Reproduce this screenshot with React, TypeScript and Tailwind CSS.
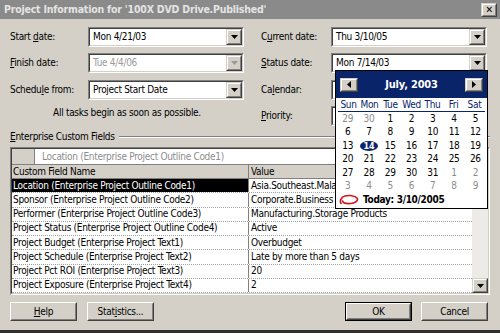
import React from "react";

const rows = [
  ["Location (Enterprise Project Outline Code1)", "Asia.Southeast.Malaysia"],
  ["Sponsor (Enterprise Project Outline Code2)", "Corporate.Business Development"],
  ["Performer (Enterprise Project Outline Code3)", "Manufacturing.Storage Products"],
  ["Project Status (Enterprise Project Outline Code4)", "Active"],
  ["Project Budget (Enterprise Project Text1)", "Overbudget"],
  ["Project Schedule (Enterprise Project Text2)", "Late by more than 5 days"],
  ["Project Pct ROI (Enterprise Project Text3)", "20"],
  ["Project Exposure (Enterprise Project Text4)", "2"],
];

const weeks = [
  [29, 30, 1, 2, 3, 4, 5],
  [6, 7, 8, 9, 10, 11, 12],
  [13, 14, 15, 16, 17, 18, 19],
  [20, 21, 22, 23, 24, 25, 26],
  [27, 28, 29, 30, 31, 1, 2],
  [3, 4, 5, 6, 7, 8, 9],
];

const isOther = (w: number, d: number) =>
  (w === 0 && d < 2) || (w === 4 && d > 4) || w === 5;

// text with one underlined access-key letter
const Key = ({ text, at }: { text: string; at: number }) => (
  <span>
    {text.slice(0, at)}
    <span className="underline underline-offset-[1px]">{text[at]}</span>
    {text.slice(at + 1)}
  </span>
);

const Arrow = ({ dir = "down", color = "#000" }: { dir?: "down" | "up" | "left" | "right"; color?: string }) => {
  if (dir === "down" || dir === "up")
    return (
      <svg width="7" height="4" viewBox="0 0 7 4">
        <path d={dir === "down" ? "M0 0h7L3.5 4z" : "M0 4h7L3.5 0z"} fill={color} />
      </svg>
    );
  return (
    <svg width="4" height="7" viewBox="0 0 4 7">
      <path d={dir === "left" ? "M4 0v7L0 3.5z" : "M0 0v7l4-3.5z"} fill={color} />
    </svg>
  );
};

const Raised = ({ className = "", children }: { className?: string; children?: React.ReactNode }) => (
  <div className={`border border-t-[#d4d0c8] border-l-[#d4d0c8] border-b-[#404040] border-r-[#404040] ${className}`}>
    <div className="h-full w-full flex items-center justify-center bg-[#d4d0c8] border border-t-white border-l-white border-b-[#808080] border-r-[#808080]">
      {children}
    </div>
  </div>
);

const Field = ({ value, disabled }: { value: string; disabled?: boolean }) => (
  <div className="h-[20px] w-[156px] border border-t-[#808080] border-l-[#808080] border-b-white border-r-white">
    <div className="h-full flex items-center bg-white border border-t-[#404040] border-l-[#404040] border-b-[#d4d0c8] border-r-[#d4d0c8]">
      <span className={`flex-1 pl-[3px] ${disabled ? "text-[#9a9a9a]" : "text-black"}`}>{value}</span>
      <Raised className="w-[16px] h-[16px]">
        <Arrow color={disabled ? "#9a9a9a" : "#000"} />
      </Raised>
    </div>
  </div>
);

const Row = ({ label, at, w, children }: { label: string; at: number; w: string; children: React.ReactNode }) => (
  <div className="flex items-center h-[20px]">
    <div className={w}>
      <Key text={label} at={at} />
    </div>
    {children}
  </div>
);

const Button = ({ children, isDefault }: { children: React.ReactNode; isDefault?: boolean }) => (
  <div className={`w-[67px] h-[19px] ${isDefault ? "border border-black" : ""}`}>
    <div className="h-full border border-t-white border-l-white border-b-[#404040] border-r-[#404040]">
      <div className="h-full flex items-center justify-center border border-t-[#d4d0c8] border-l-[#d4d0c8] border-b-[#808080] border-r-[#808080]">
        {children}
      </div>
    </div>
  </div>
);

const TodayMark = () => (
  <svg width="20" height="11" viewBox="0 0 20 11">
    <path
      d="M2 9.5C0.5 7 2 3 6 2C10 1 16 1.5 18 4C19.5 6 17 9 12 9.5C8 9.8 4 9 3.5 7"
      fill="none"
      stroke="#d4141c"
      strokeWidth="1.6"
      strokeLinecap="round"
    />
  </svg>
);

const Calendar = () => (
  <div className="absolute left-[335px] top-[70px] w-[153px] h-[139px] bg-white border border-black flex flex-col">
    <div className="h-[27px] bg-[#0a246a] flex items-center justify-between px-[4px]">
      <Raised className="w-[18px] h-[14px]">
        <Arrow dir="left" />
      </Raised>
      <span className="text-white font-bold text-[11px] tracking-[-0.2px]">July, 2003</span>
      <Raised className="w-[18px] h-[14px]">
        <Arrow dir="right" />
      </Raised>
    </div>
    <div className="mx-[2px] h-[14px] grid grid-cols-7 items-center border-b border-[#0a246a] text-[#0a246a] text-center">
      {["Sun", "Mon", "Tue", "Wed", "Thu", "Fri", "Sat"].map((d) => (
        <span key={d}>{d}</span>
      ))}
    </div>
    {weeks.map((wk, w) => (
      <div key={w} className="mx-[1px] h-[13.5px] grid grid-cols-7 items-center text-center">
        {wk.map((d, i) =>
          w === 2 && i === 1 ? (
            <span key={i} className="flex justify-center">
              <span className="w-[18px] h-[10px] rounded-[50%] bg-[#0a246a] text-white font-bold text-[9px] leading-[10px]">
                {d}
              </span>
            </span>
          ) : (
            <span key={i} className={isOther(w, i) ? "text-[#8c8c8c]" : "text-black"}>
              {d}
            </span>
          )
        )}
      </div>
    ))}
    <div className="flex items-center gap-[4px] pl-[3px] pt-[1px] font-bold">
      <TodayMark />
      <span>Today: 3/10/2005</span>
    </div>
  </div>
);

export default function App() {
  return (
    <div className="w-[500px] h-[333px] bg-[#d4d0c8] relative overflow-hidden text-[10px] tracking-[-0.3px] leading-none text-black font-['DejaVu_Sans_Condensed','Liberation_Sans',sans-serif] border-b-[3px] border-[#303030]">
      {/* title bar */}
      <div className="h-[19px] bg-[#8a8a8a] flex items-center justify-between pl-[4px] pr-[3px]">
        <span className="font-bold text-[10.5px] tracking-[-0.2px] text-[#e4e4e4]">
          Project Information for '100X DVD Drive.Published'
        </span>
        <Raised className="w-[16px] h-[14px]">
          <span className="font-bold text-[10px] text-black">✕</span>
        </Raised>
      </div>

      <div className="px-[10px] pt-[8px]">
        {/* form */}
        <div className="flex gap-[17px]">
          <div className="flex flex-col w-[234px]">
            <Row label="Start date:" at={6} w="w-[78px]">
              <Field value="Mon 4/21/03" />
            </Row>
            <div className="mt-[6px]">
              <Row label="Finish date:" at={0} w="w-[78px]">
                <Field value="Tue 4/4/06" disabled />
              </Row>
            </div>
            <div className="mt-[7px]">
              <Row label="Schedule from:" at={6} w="w-[78px]">
                <Field value="Project Start Date" />
              </Row>
            </div>
            <div className="mt-[6px] h-[14px] flex items-center justify-center">
              All tasks begin as soon as possible.
            </div>
          </div>
          <div className="flex flex-col w-[226px]">
            <Row label="Current date:" at={1} w="w-[70px]">
              <Field value="Thu 3/10/05" />
            </Row>
            <div className="mt-[6px]">
              <Row label="Status date:" at={0} w="w-[70px]">
                <Field value="Mon 7/14/03" />
              </Row>
            </div>
            <div className="mt-[7px]">
              <Row label="Calendar:" at={2} w="w-[70px]">
                <Field value="Standard" />
              </Row>
            </div>
            <div className="mt-[6px]">
              <Row label="Priority:" at={0} w="w-[70px]">
                <Field value="500" />
              </Row>
            </div>
          </div>
        </div>

        {/* group label */}
        <div className="mt-[4px] h-[14px] flex items-center gap-[4px]">
          <Key text="Enterprise Custom Fields" at={0} />
          <div className="flex-1 h-[2px] border-t border-t-[#808080] border-b border-b-white" />
        </div>

        {/* grid */}
        <div className="mt-[3px] h-[148px] border border-t-[#808080] border-l-[#808080] border-b-white border-r-white">
          <div className="h-full flex flex-col bg-white border border-t-[#404040] border-l-[#404040] border-b-[#d4d0c8] border-r-[#d4d0c8]">
            <div className="h-[16px] flex border-b border-[#808080]">
              <div className="w-[23px] bg-[#d4d0c8] border-r border-[#808080]" />
              <div className="flex-1 flex items-center pl-[7px] text-[#8c8c8c]">
                Location (Enterprise Project Outline Code1)
              </div>
            </div>
            <div className="flex-1 flex">
              <div className="flex-1 flex flex-col">
                <div className="h-[14px] flex bg-[#d4d0c8] border-b border-[#808080]">
                  <div className="w-[237px] flex items-center pl-[1px] border-r border-[#808080]">Custom Field Name</div>
                  <div className="flex-1 flex items-center pl-[2px]">Value</div>
                </div>
                {rows.map(([name, value], i) => (
                  <div key={name} className="h-[14.25px] flex border-b border-dotted border-[#a0a0a0]">
                    <div
                      className={`w-[237px] flex items-center pl-[1px] whitespace-nowrap overflow-hidden border-r border-[#808080] ${
                        i === 0 ? "bg-black text-white" : ""
                      }`}
                    >
                      {name}
                    </div>
                    <div className="flex-1 flex items-center pl-[2px] whitespace-nowrap overflow-hidden">{value}</div>
                  </div>
                ))}
              </div>
              {/* scrollbar */}
              <div className="w-[16px] flex flex-col justify-between bg-[#ecebe7]">
                <Raised className="w-[16px] h-[15px]">
                  <Arrow dir="up" />
                </Raised>
                <Raised className="w-[16px] h-[15px]">
                  <Arrow dir="down" />
                </Raised>
              </div>
            </div>
          </div>
        </div>

        {/* buttons */}
        <div className="mt-[7px] flex items-center">
          <Button>
            <Key text="Help" at={0} />
          </Button>
          <div className="ml-[10px]">
            <Button>
              <Key text="Statistics..." at={4} />
            </Button>
          </div>
          <div className="ml-auto">
            <Button isDefault>OK</Button>
          </div>
          <div className="ml-[9px] mr-[2px]">
            <Button>Cancel</Button>
          </div>
        </div>
      </div>

      <Calendar />
    </div>
  );
}
